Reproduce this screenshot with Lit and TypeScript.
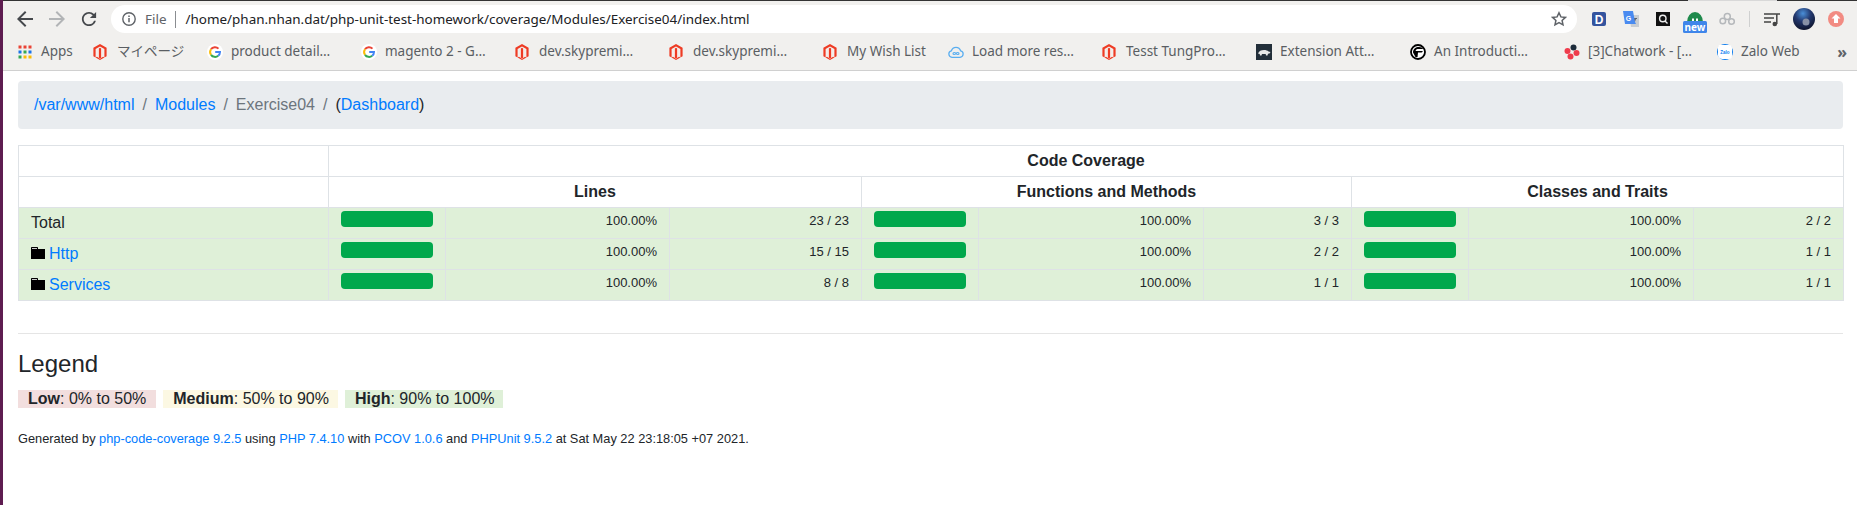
import { LitElement, html, css, svg } from "lit";
import { customElement } from "lit/decorators.js";

const magento = html`<svg class="ic" viewBox="1 0 16 16"><path fill="#ee3b24" d="M8 0l6.600 3.800v8.400L12.400 13.500V5.100L8 2.600 3.600 5.100v8.400L1.400 12.200V3.800z"/><path fill="#ee3b24" d="M6.900 4.400l1.100-.6 1.100.6v9.400L8 14.400l-1.100-.6z"/><path fill="#fbd5ce" d="M5.900 5v9.300l2.100 1.300 2.100-1.300V5l-1 .5v8.300L8 14.400l-1.100-.6V5.500z"/><path fill="#ee3b24" d="M3.600 13.500l4.400 2.500 4.400-2.500-1.300-.7L8 14.700l-3.100-1.900z"/></svg>`;
const google = html`<svg class="ic" viewBox="0 0 16 16"><circle cx="8" cy="8" r="8" fill="#fff"/><path fill="none" stroke="#ea4335" stroke-width="2" d="M11.500 4.600A5 5 0 0 0 4 5.200"/><path fill="none" stroke="#fbbc05" stroke-width="2" d="M4 5.200a5 5 0 0 0 0 5.600"/><path fill="none" stroke="#34a853" stroke-width="2" d="M4 10.800a5 5 0 0 0 7.200 1"/><path fill="none" stroke="#4285f4" stroke-width="2" d="M11.200 11.800A5 5 0 0 0 13 8H8.200"/></svg>`;
const apps = html`<svg class="ic" viewBox="0 0 16 16">${[
  ["#ea4335", "#ea4335", "#ea4335"],
  ["#1a73e8", "#34a853", "#1a73e8"],
  ["#34a853", "#fbbc05", "#fbbc05"],
].map((row, y) => row.map((c, x) => svg`<rect x=${1.500 + x * 5} y=${1.500 + y * 5} width="3" height="3" fill=${c}/>`))}</svg>`;
const cloud = html`<svg class="ic" viewBox="0 0 16 16"><path fill="none" stroke="#5aaef0" stroke-width="1.300" d="M4 13.300a3.300 3.300 0 0 1-.6-6.500 4.800 4.800 0 0 1 9.200 0 3.300 3.300 0 0 1-.6 6.500z"/><path fill="none" stroke="#5aaef0" stroke-width="1.100" d="M8 9.500c-1-1.500-3-1.300-3 0s2 1.500 3 0 3-1.300 3 0-2 1.500-3 0z"/></svg>`;
const ext = html`<svg class="ic" viewBox="0 0 16 16"><rect width="16" height="16" fill="#232f3a"/><path fill="#e8e8e8" d="M2 9.500c1-2.500 3-3.500 6-3.500 2 0 3.500.5 4.500 1.500L14.500 8l-1 1.500-1.500.3-.5 1.700h-1.500l-.3-1.500H6l-.5 1.500H4L3.700 10z"/></svg>`;
const intro = html`<svg class="ic" viewBox="0 0 16 16"><circle cx="8" cy="8" r="7" fill="#fff" stroke="#000" stroke-width="1.800"/><path fill="#000" d="M3 8.500C3 5 5.500 3 9 3c2 0 3.500.7 4.300 2H7.500C6.300 5 5.800 6 5.600 7h7.200c-.3 1-1 1.500-2 1.500H8L7.500 13H5.500z"/></svg>`;
const chatwork = html`<svg class="ic" viewBox="0 0 16 16"><circle cx="9.500" cy="3.500" r="3" fill="#1d2b3a"/><circle cx="3.500" cy="7" r="3" fill="#ef3c4c"/><circle cx="12.500" cy="9" r="3" fill="#ef3c4c"/><circle cx="6.500" cy="12.500" r="3" fill="#ef3c4c"/></svg>`;
const zalo = html`<svg class="ic" viewBox="0 0 16 16"><circle cx="8" cy="8" r="8" fill="#0a7cf0"/><path fill="#fff" d="M2 1h10c2 0 3 1 3 3v8c0 2-1 3-3 3H5l-1.500-.5C2 14 1 13 1 11V3z"/><text x="8" y="9.800" text-anchor="middle" class="zalo">Zalo</text></svg>`;

const bookmarks = [
  { icon: apps, text: "Apps", w: 76 },
  { icon: magento, text: "マイページ", w: 114 },
  { icon: google, text: "product detail…", w: 154 },
  { icon: google, text: "magento 2 - G…", w: 154 },
  { icon: magento, text: "dev.skypremi…", w: 154 },
  { icon: magento, text: "dev.skypremi…", w: 154 },
  { icon: magento, text: "My Wish List", w: 125 },
  { icon: cloud, text: "Load more res…", w: 154 },
  { icon: magento, text: "Tesst TungPro…", w: 154 },
  { icon: ext, text: "Extension Att…", w: 154 },
  { icon: intro, text: "An Introducti…", w: 154 },
  { icon: chatwork, text: "[3]Chatwork - […", w: 153 },
  { icon: zalo, text: "Zalo Web", w: 90 },
];

const rightIcons = [
  { ml: 15, w: 14, icon: html`<svg width="14" height="28" viewBox="0 0 14 28"><rect y="7" width="14" height="14" rx="2" fill="#34549e"/><text x="7" y="18.500" text-anchor="middle" class="dext">D</text></svg>` },
  { ml: 17, w: 16, icon: html`<svg width="16" height="28" viewBox="0 0 16 28"><path fill="#c9cdd2" d="M6 10h10v12H8z"/><path fill="#5f6368" d="M10 13h4v1h-1l-1.500 4-1-.8 1-1.200-1.500-2z"/><path fill="#4a8bf0" d="M0 6h10l2 11 1 2H2z"/><text x="5.500" y="15.500" text-anchor="middle" class="gext">G</text></svg>` },
  { ml: 17, w: 14, icon: html`<svg width="14" height="28" viewBox="0 0 14 28"><rect y="7" width="14" height="14" fill="#111"/><circle cx="6.800" cy="13.500" r="3.200" fill="none" stroke="#eee" stroke-width="1.400"/><path d="M9 16l2.500 2.500" stroke="#eee" stroke-width="1.400"/></svg>` },
  { ml: 13, w: 24, icon: html`<svg width="24" height="28" viewBox="0 0 24 28"><path fill="#1f8a4c" d="M4 17a8 10 0 0 1 16 0z"/><path fill="#fff" d="M9 13.500h2v2.500H9zM13 13.500h2v2.500h-2z"/><rect y="16" width="24" height="12" rx="1.500" fill="#3f86ea"/><text x="12" y="25.500" text-anchor="middle" class="newt">new</text></svg>` },
  { ml: 12, w: 16, icon: html`<svg width="16" height="28" viewBox="0 0 16 28"><g fill="none" stroke="#b5b8bb" stroke-width="1.500"><circle cx="8.300" cy="11.500" r="3"/><circle cx="3.800" cy="16" r="2.800"/><circle cx="12.500" cy="16.500" r="2.800"/></g></svg>` },
  { ml: 14, w: 1, icon: html`<div class="vsep"></div>` },
  { ml: 14, w: 16, icon: html`<svg width="16" height="28" viewBox="0 0 16 28"><path stroke="#444" stroke-width="1.600" d="M0 9h12M0 13h10M0 17h7"/><path fill="none" stroke="#444" stroke-width="1.500" d="M12.800 19V9H16"/><circle cx="10.800" cy="19" r="2.300" fill="#444"/></svg>` },
  { ml: 13, w: 22, icon: html`<svg width="22" height="28" viewBox="0 0 22 28"><defs><radialGradient id="av" cx="45%" cy="25%" r="80%"><stop offset="0" stop-color="#4a8fd8"/><stop offset=".45" stop-color="#23386e"/><stop offset="1" stop-color="#0c1024"/></radialGradient></defs><circle cx="11" cy="14" r="11" fill="url(#av)"/><circle cx="13" cy="17" r="3.500" fill="#8790a5"/></svg>` },
  { ml: 13, w: 16, icon: html`<svg width="16" height="28" viewBox="0 0 16 28"><circle cx="8" cy="14" r="8" fill="#f28b82"/><path fill="#fff" d="M8 9l4.500 4.500H10V18H6v-4.500H3.500z"/></svg>` },
];

const folder = html`<svg class="folder" width="14" height="12" viewBox="0 0 14 12"><path fill="#000" d="M0 1C0 .4.400 0 1 0h5c.6 0 1 .4 1 1v1h7v10H0z"/><path fill="#fff" d="M1 1h5v.8H1z"/></svg>`;

const rows = [
  { name: "Total", folder: false, l: "23 / 23", f: "3 / 3", c: "2 / 2" },
  { name: "Http", folder: true, l: "15 / 15", f: "2 / 2", c: "1 / 1" },
  { name: "Services", folder: true, l: "8 / 8", f: "1 / 1", c: "1 / 1" },
];
const colWidths = [310, 117, 224, 192, 117, 225, 148, 117, 225, 150];

@customElement("app-root")
export class AppRoot extends LitElement {
  static styles = css`
    :host { display: flex; height: 505px; overflow: hidden; background: #fff; font-family: "Liberation Sans", Arial, sans-serif; font-size: 16px; line-height: 1.5; color: #212529; }
    .strip { width: 3px; flex: none; background: #5e1c50; }
    .win { flex: 1; min-width: 0; display: flex; flex-direction: column; }
    .topline { height: 1px; background: linear-gradient(90deg, #333 0, #333 1685px, #d8d8d8 1685px, #d8d8d8 1774px, #333 1774px); }
    .toolbar { height: 32px; box-sizing: border-box; padding-top: 4px; background: #f1f0ee; display: flex; align-items: center; }
    .nav { display: flex; gap: 16px; padding-left: 14px; margin-right: 14px; }
    .nav svg { display: block; }
    .omni { flex: 1; height: 28px; background: #fff; border-radius: 14px; display: flex; align-items: center; font-family: "Noto Sans", sans-serif; font-size: 13.450px; padding-left: 11px; }
    .omni .info { flex: none; }
    .file { color: #5f6368; margin-left: 9px; }
    .osep { width: 1px; height: 17px; background: #8a8d91; margin: 0 10px 0 8px; }
    .url { color: #202124; flex: 1; white-space: nowrap; }
    .star { margin-right: 10px; display: block; }
    .right { flex: none; width: 280px; display: flex; align-items: center; height: 28px; }
    .right svg { display: block; }
    .vsep { width: 1px; height: 16px; background: #cfd0d0; }
    .dext { font: bold 12px "Liberation Sans", sans-serif; fill: #fff; }
    .gext { font: bold 7px "Liberation Sans", sans-serif; fill: #fff; }
    .newt { font: bold 10px "Noto Sans", sans-serif; fill: #fff; }
    .zalo { font: bold 4.500px "Liberation Sans", sans-serif; fill: #0a7cf0; }
    .bar { height: 38px; box-sizing: border-box; border-bottom: 1px solid #d0d0d0; background: #f1f0ee; display: flex; align-items: center; padding-left: 14px; font-family: "Noto Sans", "Noto Sans CJK JP", sans-serif; font-size: 13.500px; color: #5a5e63; }
    .bm { flex: none; display: flex; align-items: center; gap: 8px; white-space: nowrap; }
    .ic { width: 16px; height: 16px; flex: none; display: block; }
    .more { margin-left: auto; padding-right: 10px; font-size: 16px; font-weight: bold; color: #5f6368; line-height: 16px; }
    .page { flex: 1; padding: 10px 14px 0 15px; }
    a { color: #007bff; text-decoration: none; }
    .crumb { height: 48px; box-sizing: border-box; background: #e9ecef; border-radius: 4px; padding: 12px 16px; margin-bottom: 16px; display: flex; }
    .crumb .s { color: #6c757d; padding: 0 8px; }
    .crumb .cur { color: #6c757d; }
    table { table-layout: fixed; width: 1825px; border-collapse: collapse; margin-bottom: 32px; }
    th, td { border: 1px solid #dee2e6; padding: 3px 12px; vertical-align: top; text-align: left; height: 24px; }
    th { text-align: center; font-weight: bold; }
    tbody td { background: #dff0d8; }
    td.small { font-size: 13px; text-align: right; }
    .prog { height: 16px; background: #00a84c; border-radius: 4px; }
    .name { display: flex; align-items: center; gap: 4px; }
    .folder { flex: none; margin-top: -2px; }
    hr { border: 0; border-top: 1px solid #e5e5e5; margin: 0 0 16px; }
    h4 { font-size: 24px; font-weight: 500; line-height: 1.2; margin: 0 0 8px; }
    .legend { margin: 0 0 16px; display: flex; gap: 7px; height: 24px; align-items: center; }
    .legend span { padding: 0 10px; height: 18px; line-height: 18px; }
    .low { background: #f2dede; }
    .legend .med { background: #fcf8e3; padding-right: 9px; }
    .legend .high { background: #dff0d8; padding-right: 8px; }
    .foot { font-size: 12.800px; margin: 18px 0 0; }
  `;

  cells(frac: string) {
    return html`<td><div class="prog"></div></td><td class="small">100.00%</td><td class="small">${frac}</td>`;
  }

  render() {
    return html`
      <div class="strip"></div>
      <div class="win">
        <div class="topline"></div>
        <div class="toolbar">
          <div class="nav">
            <svg width="16" height="16" viewBox="0 0 16 16"><path fill="#45484c" d="M16 7H3.800l5.600-5.600L8 0 0 8l8 8 1.400-1.400L3.800 9H16z"/></svg>
            <svg width="16" height="16" viewBox="0 0 16 16"><path fill="#b2b4b6" d="M0 7h12.200L6.600 1.400 8 0l8 8-8 8-1.400-1.400L12.200 9H0z"/></svg>
            <svg width="16" height="16" viewBox="3 3 18 18"><path fill="#45484c" d="M17.650 6.350A7.958 7.958 0 0 0 12 4c-4.420 0-7.990 3.580-7.990 8s3.570 8 7.990 8c3.730 0 6.840-2.550 7.730-6h-2.080A5.990 5.990 0 0 1 12 18c-3.310 0-6-2.690-6-6s2.690-6 6-6c1.660 0 3.140.690 4.220 1.780L13 11h7V4l-2.350 2.350z"/></svg>
          </div>
          <div class="omni">
            <svg class="info" width="14" height="14" viewBox="0 0 14 14"><circle cx="7" cy="7" r="6.200" fill="none" stroke="#5f6368" stroke-width="1.400"/><path stroke="#5f6368" stroke-width="1.500" d="M7 6v4.200M7 3.500v1.500"/></svg>
            <span class="file">File</span><span class="osep"></span>
            <span class="url">/home/phan.nhan.dat/php-unit-test-homework/coverage/Modules/Exercise04/index.html</span>
            <svg class="star" width="16" height="16" viewBox="0 0 16 16"><path fill="none" stroke="#5f6368" stroke-width="1.500" d="M8 1.800l1.900 4.100 4.500.5-3.300 3 .9 4.400L8 11.600l-4 2.200.9-4.400-3.300-3 4.500-.5z"/></svg>
          </div>
          <div class="right">
            ${rightIcons.map((i) => html`<div style="margin-left:${i.ml}px;width:${i.w}px">${i.icon}</div>`)}
          </div>
        </div>
        <div class="bar">
          ${bookmarks.map((b) => html`<div class="bm" style="width:${b.w}px">${b.icon}<span>${b.text}</span></div>`)}
          <div class="more">»</div>
        </div>
        <div class="page">
          <div class="crumb">
            <a href="#">/var/www/html</a><span class="s">/</span><a href="#">Modules</a><span class="s">/</span><span class="cur">Exercise04</span><span class="s">/</span><span>(<a href="#">Dashboard</a>)</span>
          </div>
          <table>
            <colgroup>${colWidths.map((w) => html`<col style="width:${w}px" />`)}</colgroup>
            <thead>
              <tr><th></th><th colspan="9">Code Coverage</th></tr>
              <tr><th></th><th colspan="3">Lines</th><th colspan="3">Functions and Methods</th><th colspan="3">Classes and Traits</th></tr>
            </thead>
            <tbody>
              ${rows.map((r) => html`<tr>
                <td>${r.folder ? html`<div class="name">${folder}<a href="#">${r.name}</a></div>` : r.name}</td>
                ${this.cells(r.l)}${this.cells(r.f)}${this.cells(r.c)}
              </tr>`)}
            </tbody>
          </table>
          <hr />
          <h4>Legend</h4>
          <div class="legend">
            <span class="low"><b>Low</b>: 0% to 50%</span>
            <span class="med"><b>Medium</b>: 50% to 90%</span>
            <span class="high"><b>High</b>: 90% to 100%</span>
          </div>
          <p class="foot">Generated by <a href="#">php-code-coverage 9.2.5</a> using <a href="#">PHP 7.4.10</a> with <a href="#">PCOV 1.0.6</a> and <a href="#">PHPUnit 9.5.2</a> at Sat May 22 23:18:05 +07 2021.</p>
        </div>
      </div>
    `;
  }
}
